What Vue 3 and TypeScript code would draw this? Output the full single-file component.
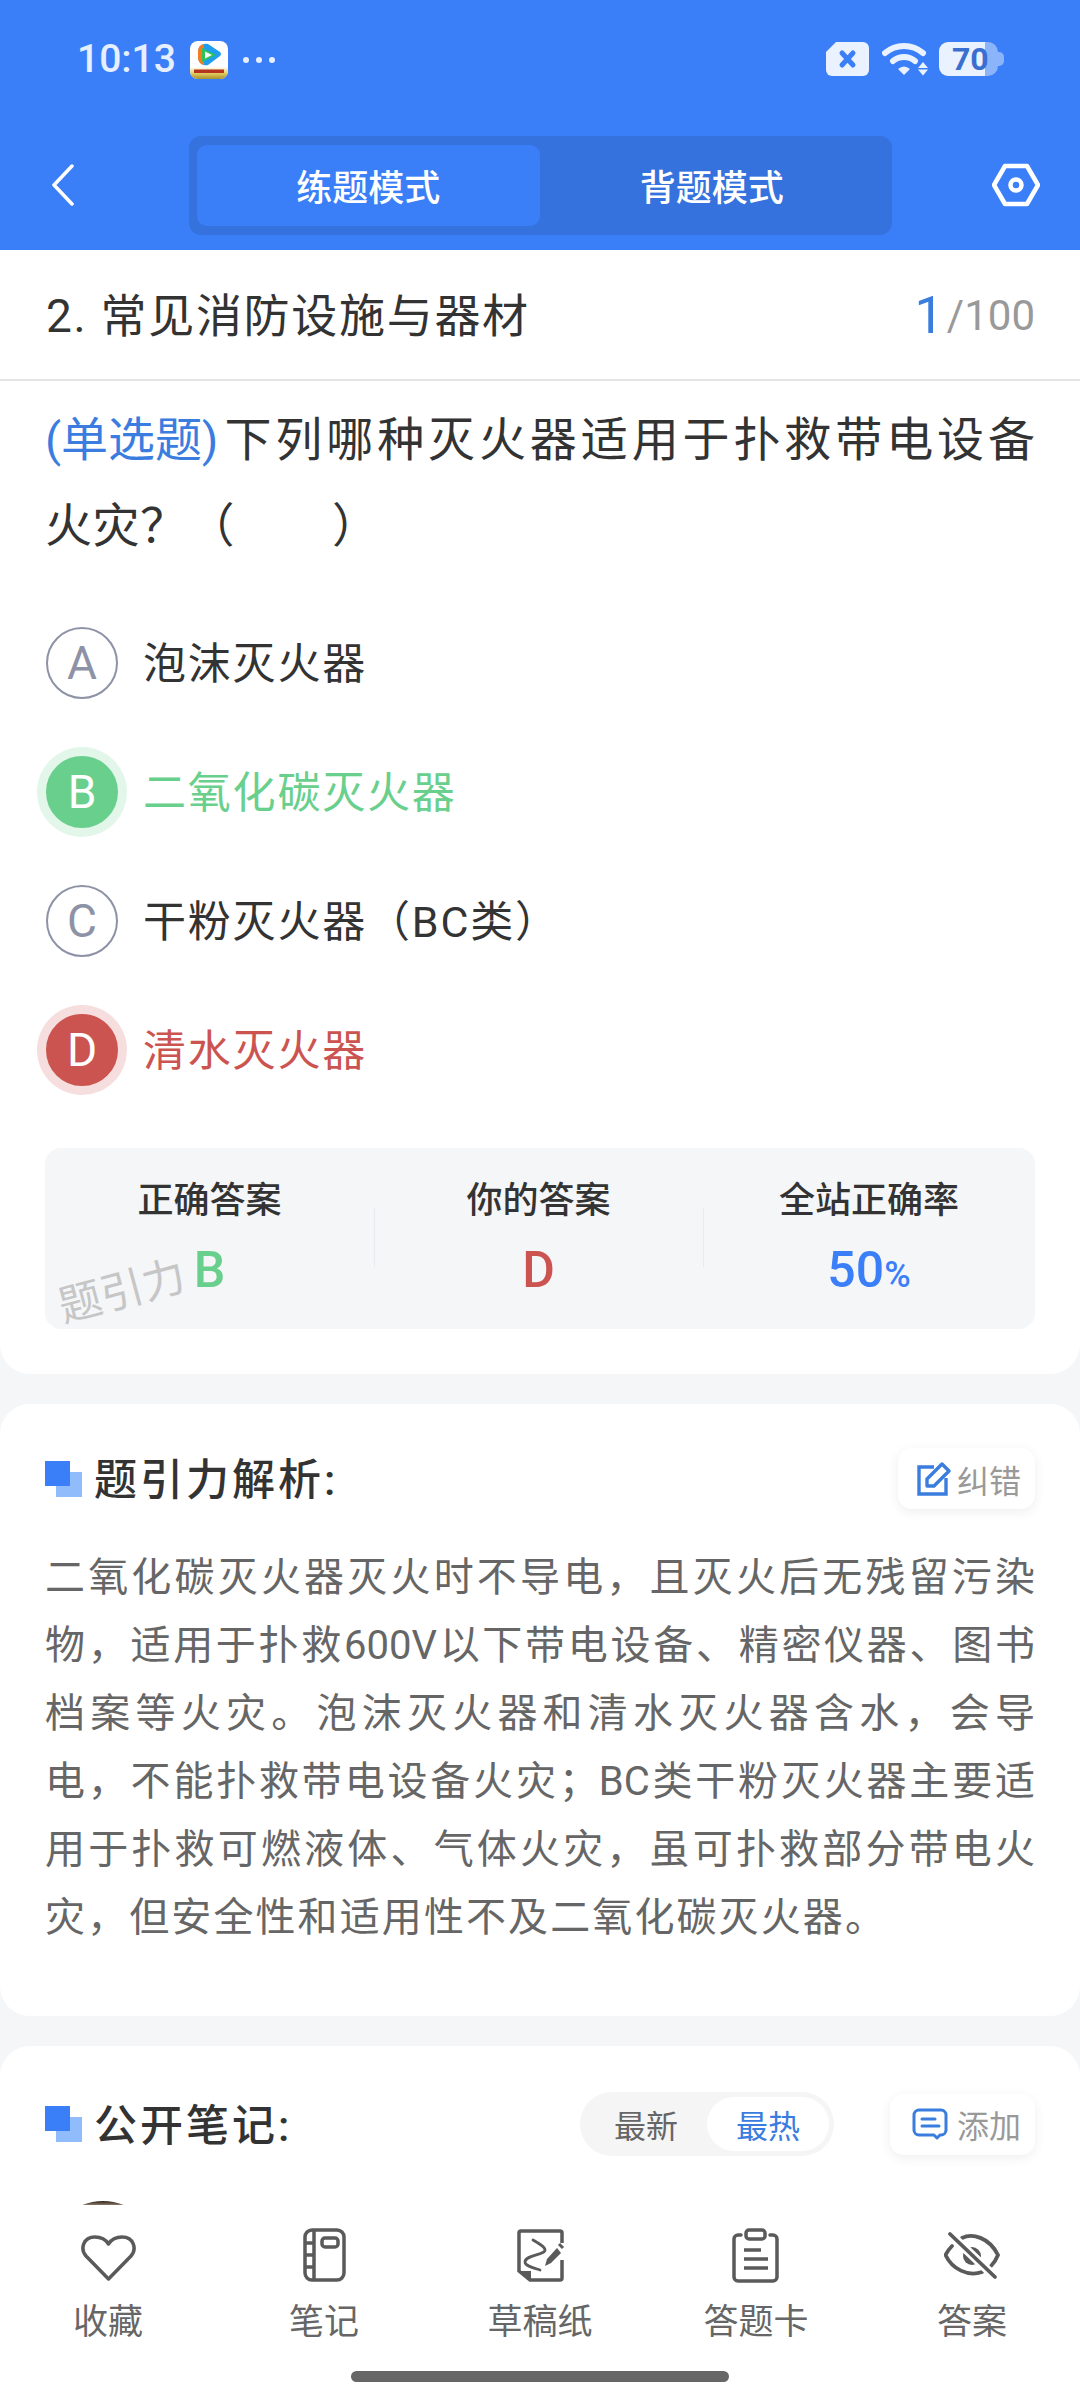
<script setup lang="ts">
const options = [
  { key: 'A', text: '泡沫灭火器', state: '' },
  { key: 'B', text: '二氧化碳灭火器', state: 'right' },
  { key: 'C', text: '干粉灭火器（BC类）', state: '' },
  { key: 'D', text: '清水灭火器', state: 'wrong' },
]
const lines = [
  '二氧化碳灭火器灭火时不导电，且灭火后无残留污染',
  '物，适用于扑救600V以下带电设备、精密仪器、图书',
  '档案等火灾。泡沫灭火器和清水灭火器含水，会导',
  '电，不能扑救带电设备火灾；BC类干粉灭火器主要适',
  '用于扑救可燃液体、气体火灾，虽可扑救部分带电火',
]
</script>

<template>
  <div class="page">
    <header class="top">
      <div class="status">
        <div class="status-left">
          <span class="time">10:13</span>
          <svg class="app" viewBox="0 0 38 38" width="38" height="38">
            <defs>
              <linearGradient id="gold" x1="0" y1="0" x2="0" y2="1">
                <stop offset="0" stop-color="#fff" />
                <stop offset="0.5" stop-color="#e6cf62" />
                <stop offset="1" stop-color="#a8912c" />
              </linearGradient>
            </defs>
            <rect width="38" height="38" rx="8" fill="#fff" />
            <path d="M0 26h38v4a8 8 0 0 1-8 8H8a8 8 0 0 1-8-8z" fill="url(#gold)" />
            <path d="M8 11a8 8 0 0 1 10-8l12 8q2 2 0 4L18 24a8 8 0 0 1-10-8z" fill="#1f9dee" />
            <path d="M8 10a7 7 0 0 1 6-7v21a7 7 0 0 1-6-7z" fill="#f47b20" />
            <path d="M12 7l14 7-14 7z" fill="#2fc25b" />
            <path d="M15 10.500v7l7-3.500z" fill="#fff" />
            <rect x="4" y="28.500" width="30" height="3.500" fill="#b5341f" />
          </svg>
          <span class="dots"><i></i><i></i><i></i></span>
        </div>
        <div class="status-right">
          <svg class="ic-x" viewBox="0 0 43 34" width="43" height="34">
            <path d="M10 0h27a6 6 0 0 1 6 6v22a6 6 0 0 1-6 6H6a6 6 0 0 1-6-6V10z" fill="#eaf1ff" />
            <path d="M16 11l11 12M27 11L16 23" stroke="#3b7ff8" stroke-width="5" stroke-linecap="round" />
          </svg>
          <svg class="ic-wifi" viewBox="0 0 46 34" width="46" height="34">
            <path d="M3 11a29 29 0 0 1 38 0" fill="none" stroke="#eaf1ff" stroke-width="6" stroke-linecap="round" />
            <path d="M11 19a17 17 0 0 1 22 0" fill="none" stroke="#eaf1ff" stroke-width="6" stroke-linecap="round" />
            <path d="M16 27q6-5 12 0l-6 6z" fill="#eaf1ff" />
            <path d="M41 20l5 6H36zM36 27.500h10l-5 6z" fill="#eaf1ff" />
          </svg>
          <div class="battery"><span>70</span></div>
        </div>
      </div>
      <nav class="nav">
        <svg class="back" viewBox="0 0 23 42" width="23" height="42">
          <path d="M21 2L3 21l18 19" fill="none" stroke="#fff" stroke-width="3.500" stroke-linecap="round" stroke-linejoin="round" />
        </svg>
        <div class="mode">
          <div class="mode-item on">练题模式</div>
          <div class="mode-item">背题模式</div>
        </div>
        <svg class="hex" viewBox="0 0 48 44" width="48" height="44">
          <path d="M13 3h22l11 19-11 19H13L2 22z" fill="none" stroke="#fff" stroke-width="4.500" stroke-linejoin="round" />
          <circle cx="24" cy="22" r="5.500" fill="none" stroke="#fff" stroke-width="4.500" />
        </svg>
      </nav>
    </header>

    <main class="content">
      <section class="card q-card">
        <div class="title-row">
          <span class="title">2. 常见消防设施与器材</span>
          <span class="count"><b>1</b>/100</span>
        </div>
        <div class="question">
          <div class="q-line"><span class="q-type">(单选题)</span><span class="q-main">下列哪种灭火器适用于扑救带电设备</span></div>
          <div class="q-line q-second">火灾？（&emsp;&emsp;）</div>
        </div>
        <ul class="options">
          <li v-for="o in options" :key="o.key" class="option" :class="o.state">
            <span class="badge">{{ o.key }}</span>
            <span class="opt-text">{{ o.text }}</span>
          </li>
        </ul>
        <div class="stats">
          <div class="stat">
            <span class="stat-label">正确答案</span>
            <span class="stat-value green">B</span>
          </div>
          <div class="stat">
            <span class="stat-label">你的答案</span>
            <span class="stat-value red">D</span>
          </div>
          <div class="stat">
            <span class="stat-label">全站正确率</span>
            <span class="stat-value blue">50<small>%</small></span>
          </div>
          <span class="mark">题引力</span>
        </div>
      </section>

      <section class="card exp-card">
        <div class="head">
          <span class="squares"></span>
          <h2>题引力解析:</h2>
          <div class="chip">
            <svg viewBox="0 0 34 34" width="34" height="34">
              <path d="M17 5H2v27h27V16" fill="none" stroke="#3b7ddf" stroke-width="3.400" />
              <path d="M10 24v-7L25 2l7 7-15 15z" fill="none" stroke="#3b7ddf" stroke-width="3.400" stroke-linejoin="round" />
            </svg>
            <span>纠错</span>
          </div>
        </div>
        <div class="exp">
          <p v-for="l in lines" :key="l" class="exp-line">{{ l }}</p>
          <p class="exp-last">灾，但安全性和适用性不及二氧化碳灭火器。</p>
        </div>
      </section>

      <section class="card notes-card">
        <div class="head note-head">
          <span class="squares"></span>
          <h2>公开笔记:</h2>
          <div class="seg">
            <span class="seg-item">最新</span>
            <span class="seg-item on">最热</span>
          </div>
          <div class="chip add">
            <svg viewBox="0 0 36 32" width="36" height="32">
              <path d="M22 27H7a5 5 0 0 1-5-5V7a5 5 0 0 1 5-5h22a5 5 0 0 1 5 5v15a5 5 0 0 1-5 5h-1l-3 3z" fill="none" stroke="#3b7ddf" stroke-width="3" stroke-linejoin="round" />
              <path d="M10 11h13M10 18h17" stroke="#3b7ddf" stroke-width="3" stroke-linecap="round" />
            </svg>
            <span>添加</span>
          </div>
        </div>
        <div class="avatar"></div>
      </section>
    </main>

    <footer class="bar">
      <div class="tabs">
        <div class="tab">
          <svg viewBox="0 0 56 56" width="56" height="56">
            <path d="M28.500 52L6 29C0 22 3 10 15 10c6 0 11 3 13.500 7C31 13 36 10 42 10c12 0 15 12 9 19z" fill="none" stroke="#5a5a5a" stroke-width="3.500" stroke-linejoin="round" />
          </svg>
          <span>收藏</span>
        </div>
        <div class="tab">
          <svg viewBox="0 0 56 56" width="56" height="56">
            <rect x="9" y="3" width="39" height="50" rx="7" fill="none" stroke="#5a5a5a" stroke-width="3.500" />
            <path d="M18 3v50M9 16h9M9 28h9M9 40h9" stroke="#5a5a5a" stroke-width="3.500" />
            <rect x="26" y="11" width="16" height="9" rx="3" fill="none" stroke="#5a5a5a" stroke-width="3.500" />
          </svg>
          <span>笔记</span>
        </div>
        <div class="tab">
          <svg viewBox="0 0 56 56" width="56" height="56">
            <path d="M50 16V6q0-2-2-2H9Q7 4 7 6v38l11 9h30q2 0 2-2V33" fill="none" stroke="#5a5a5a" stroke-width="3.500" />
            <path d="M7 44h12v10z" fill="#5a5a5a" />
            <path d="M21 13c7 4 12 7 12 10 0 5-20 5-20 12 0 4 9 6 15 8" fill="none" stroke="#5a5a5a" stroke-width="2.800" stroke-linecap="round" />
            <path d="M33 39l2-7 10-11 4 5-10 10z" fill="#5a5a5a" />
            <path d="M47 17l4 4" stroke="#5a5a5a" stroke-width="3" />
          </svg>
          <span>草稿纸</span>
        </div>
        <div class="tab">
          <svg viewBox="0 0 56 56" width="56" height="56">
            <path d="M13 8h-3a4 4 0 0 0-4 4v38a4 4 0 0 0 4 4h35a4 4 0 0 0 4-4V12a4 4 0 0 0-4-4h-3" fill="none" stroke="#5a5a5a" stroke-width="3.500" stroke-linecap="round" />
            <rect x="18" y="3" width="19" height="9" rx="3" fill="none" stroke="#5a5a5a" stroke-width="3.500" />
            <path d="M16 23h17M16 32h24M16 41h24" stroke="#5a5a5a" stroke-width="3.500" />
          </svg>
          <span>答题卡</span>
        </div>
        <div class="tab">
          <svg viewBox="0 0 56 56" width="56" height="56">
            <path d="M18 11C28 6 45 10 54 28c-2 5-4 8-7 11" fill="none" stroke="#5a5a5a" stroke-width="3.800" stroke-linecap="round" />
            <path d="M8 19c-3 3-5 6-6.500 9C8 42 24 50 38 45" fill="none" stroke="#5a5a5a" stroke-width="3.800" stroke-linecap="round" />
            <circle cx="28" cy="29" r="9" fill="#5a5a5a" />
            <path d="M6 7l45 43" stroke="#fff" stroke-width="9" />
            <path d="M6 7l45 43" stroke="#5a5a5a" stroke-width="3.800" stroke-linecap="round" />
          </svg>
          <span>答案</span>
        </div>
      </div>
      <div class="home"></div>
    </footer>
  </div>
</template>

<style>
html, body { margin: 0; padding: 0; background: #f5f6f8; }
</style>

<style scoped>
* { box-sizing: border-box; }
.page {
  width: 1080px; height: 2400px; overflow: hidden;
  display: flex; flex-direction: column;
  background: #f5f6f8; color: #333;
  font-family: Roboto, "Noto Sans CJK SC", sans-serif;
}
.top { height: 250px; flex: none; background: #3b7ff8; color: #fff; }
.status { height: 118px; padding: 41px 76px 0 77px; display: flex; justify-content: space-between; }
.status-left { display: flex; align-items: center; height: 37px; }
.time { font-size: 39px; font-weight: 500; color: #e6efff; width: 113px; line-height: 37px; }
.app { flex: none; }
.dots { display: flex; gap: 7px; margin-left: 15px; }
.dots i { width: 6px; height: 6px; border-radius: 50%; background: #e6efff; }
.status-right { display: flex; align-items: center; height: 36px; }
.ic-wifi { margin-left: 13px; }
.battery {
  width: 59px; height: 34px; margin: 0 6px 0 11px; border-radius: 9px 10px 10px 9px; position: relative;
  background: linear-gradient(90deg, #eaf1ff 0 46px, #8cb4fb 46px);
  color: #3a6fd0; font-size: 32px; font-weight: 700; line-height: 34px; padding-left: 13px;
}
.battery::after {
  content: ''; position: absolute; right: -6px; top: 10px; width: 6px; height: 14px;
  border-radius: 0 5px 5px 0; background: #8cb4fb;
}
.nav { height: 132px; display: flex; align-items: flex-start; position: relative; }
.back { margin: 46px 0 0 51px; flex: none; }
.mode {
  margin: 18px 0 0 115px; width: 703px; height: 99px; padding: 9px 8px;
  background: #3672de; border-radius: 12px; display: flex; flex: none;
}
.mode-item {
  width: 344px; height: 81px; border-radius: 10px; margin-right: 1px; padding-bottom: 2px;
  display: flex; align-items: center; justify-content: center;
  font-size: 36px; font-weight: 500; color: #fff;
}
.mode-item.on { background: #3b7ff8; }
.hex { margin: 45px 0 0 100px; flex: none; }

.content { flex: 1; min-height: 0; overflow: hidden; display: flex; flex-direction: column; gap: 30px; }
.card { background: #fff; border-radius: 30px; flex: none; }
.q-card { height: 1124px; border-radius: 0 0 30px 30px; }
.title-row {
  height: 131px; border-bottom: 2px solid #e5e5e5; padding: 0 45px 6px 46px;
  display: flex; align-items: center; justify-content: space-between;
}
.title { font-size: 46px; letter-spacing: 1.700px; color: #333; }
.count { color: #999; font-size: 42px; display: inline-flex; align-items: center; margin-top: 8px; }
.count b { color: #3b7ddf; font-size: 52px; font-weight: 400; margin-right: 3px; }
.question { margin: 16px 0 0 45px; font-size: 47px; line-height: 86px; color: #333; white-space: nowrap; }
.q-type { color: #3b7ddf; margin-right: 6px; }
.q-main { letter-spacing: 3.900px; }
.q-second { letter-spacing: 0.500px; }
.options { list-style: none; margin: 29px 0 0; padding: 0; }
.option { height: 129px; padding-left: 46px; display: flex; align-items: center; }
.badge {
  width: 72px; height: 72px; border-radius: 50%; flex: none;
  border: 2px solid #8e92a6; color: #8e92a6;
  display: flex; align-items: center; justify-content: center; font-size: 46px;
}
.opt-text { margin-left: 25px; padding-bottom: 6px; font-size: 43px; letter-spacing: 1.800px; color: #333; }
.right .badge { background: #69cf8c; border-color: #69cf8c; color: #fff; box-shadow: 0 0 0 9px #e2f6e9; }
.right .opt-text { color: #69cf8c; }
.wrong .badge { background: #cc5450; border-color: #cc5450; color: #fff; box-shadow: 0 0 0 9px #f5dedd; }
.wrong .opt-text { color: #cc5450; }
.stats {
  margin: 34px 45px 0; height: 181px; background: #f5f6f8; border-radius: 16px;
  display: grid; grid-template-columns: 329px 329px 332px; position: relative;
}
.stat { display: flex; flex-direction: column; align-items: center; padding-top: 32px; position: relative; }
.stat + .stat::before {
  content: ''; position: absolute; left: 0; top: 60px; height: 59px; width: 1px; background: #e9eaed;
}
.stat-label { font-size: 36px; font-weight: 500; line-height: 42px; color: #333; }
.stat-value { font-size: 50px; font-weight: 500; line-height: 56px; margin-top: 20px; }
.stat-value small { font-size: 36px; }
.green { color: #69cf8c; }
.red { color: #cc5450; }
.blue { color: #3b7ff8; }
.mark {
  position: absolute; left: 21px; top: 134px; font-size: 43px; color: #c6c6c6; line-height: 50px;
  transform: rotate(-15deg); transform-origin: left bottom;
}
.exp-card { height: 612px; padding: 44px 45px 0; }
.notes-card { padding: 46px 45px 0; height: 300px; }
.head { display: flex; align-items: center; height: 61px; }
.note-head { height: 64px; }
.squares { width: 37px; height: 36px; position: relative; flex: none; margin-right: 12px; }
.squares::before { content: ''; position: absolute; right: 0; bottom: 0; width: 26px; height: 25px; background: #90bcfb; }
.squares::after { content: ''; position: absolute; left: 0; top: 0; width: 25px; height: 25px; background: #3b7ff8; }
.head h2 { margin: 0 0 5px; font-size: 43px; font-weight: 500; letter-spacing: 3px; color: #333; }
.chip {
  margin-left: auto; height: 61px; width: 137px; border-radius: 14px; background: #fff;
  box-shadow: 0 3px 12px rgba(0,0,0,.07);
  display: flex; align-items: center; padding-left: 19px; gap: 6px; flex: none;
}
.chip span { font-size: 32px; color: #999; }
.exp { margin-top: 35px; font-size: 40px; line-height: 68px; color: #666; }
.exp p { margin: 0; height: 68px; white-space: nowrap; }
.exp-line { text-align: justify; text-align-last: justify; }
.exp-last { letter-spacing: 2.100px; }
.seg {
  margin-left: auto; width: 254px; height: 64px; border-radius: 32px; background: #f5f5f5;
  display: flex; align-items: center; padding: 0 5px; justify-content: space-between; flex: none;
}
.seg-item { font-size: 32px; color: #666; width: 122px; height: 54px; border-radius: 27px; display: flex; align-items: center; justify-content: center; }
.seg-item.on { background: #fff; color: #3b7ddf; }
.add { margin-left: 56px; width: 145px; padding-left: 22px; gap: 9px; }
.avatar {
  width: 110px; height: 110px; border-radius: 50%; margin: 45px 0 0 3px;
  background: linear-gradient(180deg, #2b2219, #8a7a68 4px, #ccc 20px);
}
.bar { height: 195px; flex: none; background: #fff; position: relative; }
.tabs { display: grid; grid-template-columns: repeat(5, 216px); }
.tab { display: flex; flex-direction: column; align-items: center; padding-top: 22px; }
.tab span { font-size: 35px; line-height: 44px; color: #666; margin-top: 18px; }
.home { position: absolute; left: 351px; top: 166px; width: 378px; height: 11px; border-radius: 6px; background: #666; }
</style>
